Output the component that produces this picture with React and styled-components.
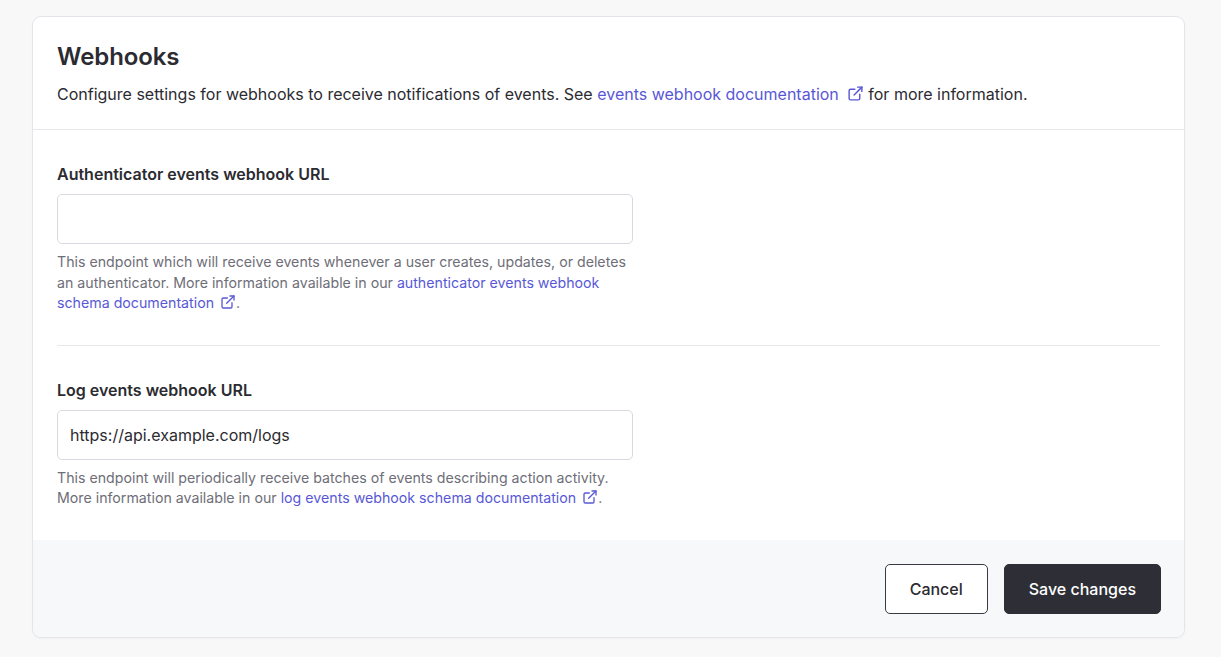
import React from 'react'
import styled, { createGlobalStyle } from 'styled-components'
import { ExternalLink } from 'lucide-react'

const GlobalStyle = createGlobalStyle`
  html, body {
    margin: 0;
    padding: 0;
    background: #f8f8f8;
    font-family: Inter, "Noto Sans", "Liberation Sans", sans-serif;
    color: #2b2b31;
  }
  * {
    box-sizing: border-box;
  }
`

const Page = styled.div`
  padding: 16px 36px 18px 32px;
`

const Card = styled.section`
  background: #fff;
  border: 1px solid #e4e4ea;
  border-radius: 9px;
  overflow: hidden;
  box-shadow: 0 1px 2px rgba(0, 0, 0, 0.03);
`

const Header = styled.header`
  padding: 24px 24px 23px;
  border-bottom: 1px solid #e7e7ec;
`

const Title = styled.h1`
  margin: 0;
  font-size: 24px;
  line-height: 32px;
  font-weight: 600;
  color: #2b2b31;
  letter-spacing: -0.1px;
`

const Description = styled.p`
  margin: 9px 0 0;
  font-size: 16px;
  line-height: 24px;
  color: #2b2b31;
`

const Link = styled.a`
  color: #5858d6;
  text-decoration: none;
  & svg {
    display: inline-block;
    vertical-align: -2px;
    margin-left: ${props => (props.$small ? '6px' : '8px')};
  }
`

const Body = styled.div`
  padding: 32px 24px 31px;
`

const Field = styled.div`
  display: flex;
  flex-direction: column;
  width: 576px;
`

const Label = styled.label`
  font-size: 16px;
  line-height: 24px;
  font-weight: 600;
  color: #2b2b31;
`

const Input = styled.input`
  margin-top: 8px;
  height: 50px;
  width: 100%;
  border: 1px solid #d8d8e0;
  border-radius: 5px;
  padding: 0 12px;
  font-family: inherit;
  font-size: 16px;
  color: #2b2b31;
  background: #fff;
  outline: none;
`

const Help = styled.p`
  margin: 8px 0 0;
  font-size: 14.2px;
  line-height: 20.5px;
  color: #6e6e78;
`

const Divider = styled.hr`
  border: none;
  border-top: 1px solid #e7e7ec;
  margin: 31px 0 32px;
`

const Footer = styled.footer`
  background: #f7f8fa;
  padding: 24px 23px 23px;
  display: flex;
  justify-content: flex-end;
  gap: 16px;
`

const Button = styled.button`
  height: 50px;
  padding: 0 24px;
  border-radius: 5px;
  font-family: inherit;
  font-size: 16px;
  font-weight: 500;
  cursor: pointer;
  border: 1px solid ${props => (props.$primary ? '#2e2f36' : '#3a3a42')};
  background: ${props => (props.$primary ? '#2e2f36' : '#fff')};
  color: ${props => (props.$primary ? '#fff' : '#2b2b31')};
`

const App = () => (
  <>
    <GlobalStyle />
    <Page>
      <Card>
        <Header>
          <Title>Webhooks</Title>
          <Description>
            Configure settings for webhooks to receive notifications of events. See{' '}
            <Link href="#">
              events webhook documentation
              <ExternalLink size={17} strokeWidth={2} />
            </Link>{' '}
            for more information.
          </Description>
        </Header>
        <Body>
          <Field>
            <Label>Authenticator events webhook URL</Label>
            <Input type="text" defaultValue="" />
            <Help>
              This endpoint which will receive events whenever a user creates, updates, or deletes
              an authenticator. More information available in our{' '}
              <Link href="#" $small>
                authenticator events webhook schema documentation
                <ExternalLink size={16} strokeWidth={2} />
              </Link>
              .
            </Help>
          </Field>
          <Divider />
          <Field>
            <Label>Log events webhook URL</Label>
            <Input type="text" defaultValue="https://api.example.com/logs" />
            <Help>
              This endpoint will periodically receive batches of events describing action activity.
              More information available in our{' '}
              <Link href="#" $small>
                log events webhook schema documentation
                <ExternalLink size={16} strokeWidth={2} />
              </Link>
              .
            </Help>
          </Field>
        </Body>
        <Footer>
          <Button>Cancel</Button>
          <Button $primary>Save changes</Button>
        </Footer>
      </Card>
    </Page>
  </>
)

export default App
